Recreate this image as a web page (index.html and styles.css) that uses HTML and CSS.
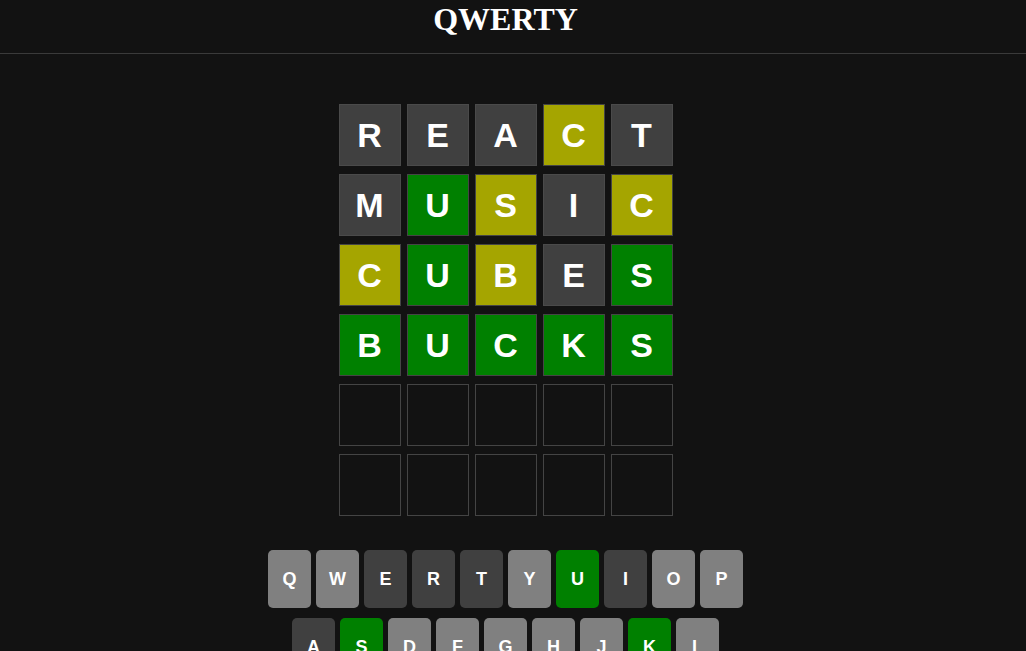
FILE: index.html
```html
<!DOCTYPE html>
<html>
<head>
<meta charset="utf-8">
<title>QWERTY</title>
<link rel="stylesheet" href="styles.css">
</head>
<body>
<header class="header"><h1 class="title">QWERTY</h1></header>
<main class="main">
  <div class="board">
    <div class="row"><div class="tile absent">R</div><div class="tile absent">E</div><div class="tile absent">A</div><div class="tile present">C</div><div class="tile absent">T</div></div>
    <div class="row"><div class="tile absent">M</div><div class="tile correct">U</div><div class="tile present">S</div><div class="tile absent">I</div><div class="tile present">C</div></div>
    <div class="row"><div class="tile present">C</div><div class="tile correct">U</div><div class="tile present">B</div><div class="tile absent">E</div><div class="tile correct">S</div></div>
    <div class="row"><div class="tile correct">B</div><div class="tile correct">U</div><div class="tile correct">C</div><div class="tile correct">K</div><div class="tile correct">S</div></div>
    <div class="row"><div class="tile"></div><div class="tile"></div><div class="tile"></div><div class="tile"></div><div class="tile"></div></div>
    <div class="row"><div class="tile"></div><div class="tile"></div><div class="tile"></div><div class="tile"></div><div class="tile"></div></div>
  </div>
  <div class="keyboard">
    <div class="krow">
      <div class="key">Q</div><div class="key">W</div><div class="key k-absent">E</div><div class="key k-absent">R</div><div class="key k-absent">T</div><div class="key">Y</div><div class="key k-correct">U</div><div class="key k-absent">I</div><div class="key">O</div><div class="key">P</div>
    </div>
    <div class="krow">
      <div class="key k-absent">A</div><div class="key k-correct">S</div><div class="key">D</div><div class="key">F</div><div class="key">G</div><div class="key">H</div><div class="key">J</div><div class="key k-correct">K</div><div class="key">L</div>
    </div>
    <div class="krow">
      <div class="key wide">ENTER</div><div class="key">Z</div><div class="key">X</div><div class="key">C</div><div class="key">V</div><div class="key">B</div><div class="key">N</div><div class="key">M</div><div class="key wide">DEL</div>
    </div>
  </div>
</main>
</body>
</html>
```
FILE: styles.css
```css
html, body {
  margin: 0;
  padding: 0;
  background: #121212;
  color: #ffffff;
  overflow: hidden;
  height: 651px;
}
.header {
  height: 53px;
  border-bottom: 1px solid #3a3a3a;
  display: flex;
  justify-content: center;
  padding-right: 15px;
}
.title {
  margin: 0;
  font-family: "Liberation Serif", "Times New Roman", serif;
  font-weight: bold;
  font-size: 32px;
  line-height: 38px;
}
.main {
  display: flex;
  flex-direction: column;
  align-items: center;
  padding-right: 15px;
  padding-top: 50px;
}
.board {
  display: flex;
  flex-direction: column;
  gap: 8px;
}
.row {
  display: flex;
  gap: 6px;
}
.tile {
  box-sizing: border-box;
  width: 62px;
  height: 62px;
  border: 1px solid #444444;
  display: flex;
  align-items: center;
  justify-content: center;
  font-family: "Liberation Sans", Arial, sans-serif;
  font-weight: bold;
  font-size: 34px;
  color: #ffffff;
}
.absent { background: #404040; border-color: #4a4a4a; }
.present { background: #a5a500; border-color: #454545; }
.correct { background: #008000; border-color: #454545; }
.keyboard {
  margin-top: 34px;
  display: flex;
  flex-direction: column;
  align-items: center;
  gap: 10px;
}
.krow {
  display: flex;
  gap: 5px;
}
.key {
  width: 43px;
  height: 58px;
  border-radius: 5px;
  background: #808080;
  display: flex;
  align-items: center;
  justify-content: center;
  font-family: "Liberation Sans", Arial, sans-serif;
  font-weight: bold;
  font-size: 18px;
  color: #ffffff;
}
.key.wide { width: 66px; font-size: 13px; }
.k-absent { background: #404040; }
.k-correct { background: #008000; }
```
